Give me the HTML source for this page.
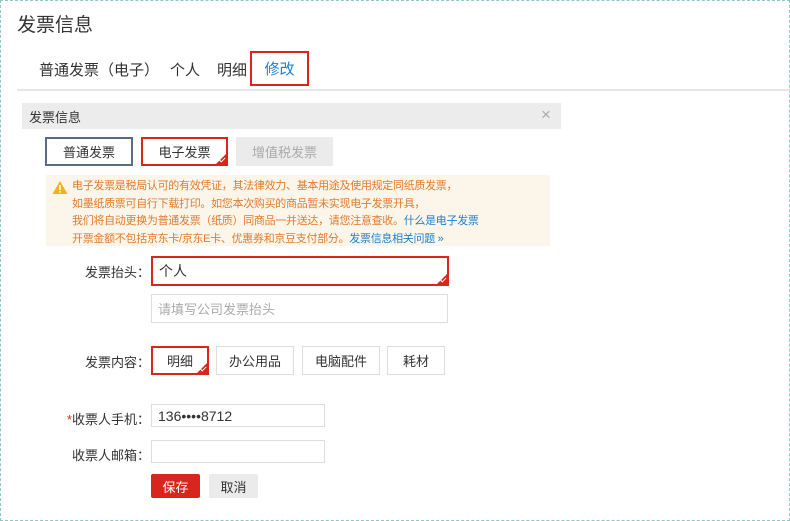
<!DOCTYPE html>
<html><head><meta charset="utf-8"><style>
*{box-sizing:border-box;margin:0;padding:0}
body{width:790px;height:521px;background:#fff;font-family:"Liberation Sans","Noto Sans CJK SC",sans-serif;color:#333;position:relative;overflow:hidden}
.a{position:absolute;white-space:nowrap}
.frame{position:absolute;left:0;top:0;width:790px;height:521px;border:1px dashed #8cc9c4}
.btn{position:absolute;display:flex;align-items:center;justify-content:center;font-size:13px;border:1px solid #ddd;background:#fff;color:#333}
.lbl{position:absolute;font-size:13px;color:#333;text-align:right;width:130px}
.inp{position:absolute;border:1px solid #ddd;background:#fff;font-size:13px;display:flex;align-items:center;padding-left:6px}
.sel{border:2px solid #d9261c !important}
.sel::after{content:"";position:absolute;right:-1px;bottom:-1px;border-style:solid;border-width:0 0 12px 12px;border-color:transparent transparent #d9261c transparent}
.sel::before{content:"";position:absolute;right:1px;bottom:3px;width:5px;height:3px;border-left:1.5px solid #fff;border-bottom:1.5px solid #fff;transform:rotate(-45deg);z-index:2}
.note{position:absolute;left:46px;top:175px;width:504px;height:71px;background:#fcf6ea;font-size:11px;letter-spacing:-0.3px;color:#e27a2c;line-height:17.7px;padding:3px 0 0 26px;white-space:nowrap}
.note a{color:#1e7fcc;text-decoration:none}
</style></head><body>
<div class="frame"></div>
<div class="a" style="left:17px;top:10px;font-size:19px;color:#333">发票信息</div>
<div class="a" style="left:39px;top:59px;font-size:15px">普通发票（电子）</div>
<div class="a" style="left:170px;top:59px;font-size:15px">个人</div>
<div class="a" style="left:217px;top:59px;font-size:15px">明细</div>
<div class="a" style="left:250px;top:51px;width:59px;height:35px;border:2px solid #d9261c;font-size:15px;color:#1e7fcc;display:flex;align-items:center;justify-content:center">修改</div>
<div class="a" style="left:17px;top:89px;width:773px;height:2px;background:#e6e6e6"></div>
<div class="a" style="left:22px;top:103px;width:539px;height:26px;background:#ececec"></div>
<div class="a" style="left:29px;top:107px;font-size:13px;color:#333">发票信息</div>
<div class="a" style="left:541px;top:105px;font-size:17px;color:#aaa">×</div>
<div class="btn" style="left:45px;top:137px;width:88px;height:29px;border:2px solid #5c6b82">普通发票</div>
<div class="btn sel" style="left:141px;top:137px;width:87px;height:29px">电子发票</div>
<div class="btn" style="left:236px;top:137px;width:97px;height:29px;background:#ebebeb;border-color:#ebebeb;color:#aaa">增值税发票</div>
<div class="note">
<svg style="position:absolute;left:6px;top:5px" width="16" height="15" viewBox="0 0 16 15"><path d="M8 1 L15.5 14 H0.5 Z" fill="#f3b21c"/><rect x="7.2" y="5" width="1.6" height="5" fill="#fff"/><rect x="7.2" y="11" width="1.6" height="1.6" fill="#fff"/></svg>
电子发票是税局认可的有效凭证，其法律效力、基本用途及使用规定同纸质发票，<br>如墨纸质票可自行下载打印。如您本次购买的商品暂未实现电子发票开具，<br>我们将自动更换为普通发票（纸质）同商品一并送达，请您注意查收。<a>什么是电子发票</a><br>开票金额不包括京东卡/京东E卡、优惠券和京豆支付部分。<a>发票信息相关问题 »</a>
</div>
<div class="lbl" style="left:20px;top:262px">发票抬头：</div>
<div class="inp sel" style="left:151px;top:256px;width:298px;height:30px;font-size:14px">个人</div>
<div class="inp" style="left:151px;top:294px;width:297px;height:29px;color:#aaa">请填写公司发票抬头</div>
<div class="lbl" style="left:20px;top:352px">发票内容：</div>
<div class="btn sel" style="left:151px;top:346px;width:58px;height:29px">明细</div>
<div class="btn" style="left:216px;top:346px;width:78px;height:29px">办公用品</div>
<div class="btn" style="left:302px;top:346px;width:78px;height:29px">电脑配件</div>
<div class="btn" style="left:387px;top:346px;width:58px;height:29px">耗材</div>
<div class="lbl" style="left:20px;top:409px"><span style="color:#d9261c">*</span>收票人手机：</div>
<div class="inp" style="left:151px;top:404px;width:174px;height:23px;font-size:14px">136••••8712</div>
<div class="lbl" style="left:20px;top:445px">收票人邮箱：</div>
<div class="inp" style="left:151px;top:440px;width:174px;height:23px"></div>
<div class="btn" style="left:151px;top:474px;width:49px;height:24px;background:#d9261c;border-color:#d9261c;color:#fff;border-radius:2px">保存</div>
<div class="btn" style="left:209px;top:474px;width:49px;height:24px;background:#ebebeb;border-color:#ebebeb;border-radius:2px">取消</div>
</body></html>
